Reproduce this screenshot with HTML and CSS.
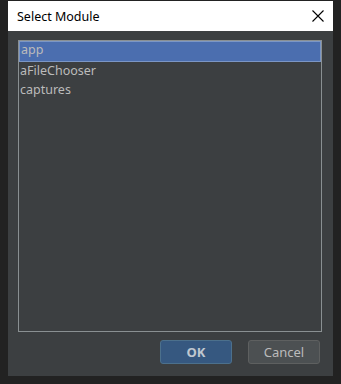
FILE: index.html
```html
<!DOCTYPE html>
<html lang="en">
<head>
    <meta charset="UTF-8">
    <title>Select Module</title>
    <link rel="stylesheet" href="styles.css">
</head>
<body>
<div class="dialog">
    <div class="titleBar">
        <span class="title">Select Module</span>
        <svg class="close" width="12" height="12" viewBox="0 0 12 12">
            <path d="M0.5 0.5L11.5 11.5M11.5 0.5L0.5 11.5" stroke="#000" stroke-width="1.1" fill="none"/>
        </svg>
    </div>
    <div class="content">
        <ul class="moduleList">
            <li class="selected">app</li>
            <li>aFileChooser</li>
            <li>captures</li>
        </ul>
        <div class="buttons">
            <a class="btn btnOk" href="javascript:;">OK</a>
            <a class="btn" href="javascript:;">Cancel</a>
        </div>
    </div>
</div>
</body>
</html>
```
FILE: styles.css
```css
*{
    margin: 0;
    padding: 0;
}
body{
    width: 341px;
    height: 384px;
    background: #222222;
    font-family: "Noto Sans", "Liberation Sans", sans-serif;
    overflow: hidden;
}
.dialog{
    width: 325px;
    height: 375px;
    margin: 1px 0 0 8px;
    background: #3c3f41;
    display: flex;
    flex-direction: column;
}
.titleBar{
    height: 30px;
    background: #fff;
    display: flex;
    align-items: center;
    justify-content: space-between;
    padding: 0 9px 0 9px;
}
.title{
    font-size: 12.5px;
    color: #000;
}
.content{
    flex: 1;
    display: flex;
    flex-direction: column;
    padding: 9px 11px 12px 10px;
}
.moduleList{
    list-style: none;
    height: 290px;
    border: 1px solid #8a9092;
    background: #3c3f41;
}
.moduleList li{
    height: 19px;
    line-height: 18px;
    padding-left: 1px;
    font-size: 12.5px;
    color: #bbbbbb;
}
.moduleList li.selected{
    background: #4b6eaf;
    border: 1px solid #7b96c5;
    line-height: 16px;
}
.buttons{
    display: flex;
    justify-content: flex-end;
    gap: 16px;
    margin-top: 8px;
    padding-right: 2px;
}
.btn{
    width: 70px;
    height: 22px;
    line-height: 22px;
    text-align: center;
    text-decoration: none;
    font-size: 13px;
    color: #bbbbbb;
    background: #4c5052;
    border: 1px solid #5e6060;
    border-radius: 3px;
}
.btnOk{
    background: #365880;
    border-color: #4c708c;
    color: #c0c8d0;
    font-weight: 700;
}
```
